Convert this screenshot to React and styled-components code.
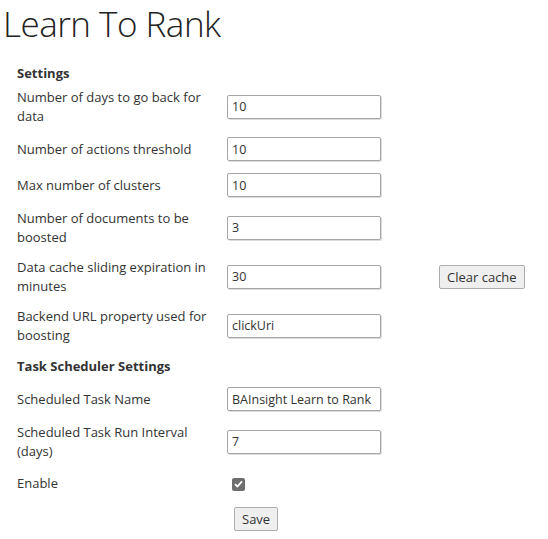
import React from 'react';
import styled, { createGlobalStyle } from 'styled-components';

const Global = createGlobalStyle`
	body {
		margin: 0;
		background: #fff;
		font-family: "Open Sans", "Noto Sans", sans-serif;
		color: #333;
	}
`

const Page = styled.div`
	padding: 0 0 0 3px;
`

const Title = styled.h1`
	margin: 0;
	font-size: 35px;
	line-height: 48px;
	font-weight: 300;
	letter-spacing: -0.5px;
	color: #222;
`

const Form = styled.div`
	padding: 16px 0 0 14px;
	font-size: 13px;
	line-height: 18.5px;
`

const Heading = styled.div`
	font-weight: 700;
	line-height: 18px;
	margin: ${p => p.$top || 0}px 0 ${p => p.$bottom || 0}px;
`

const Row = styled.div`
	display: grid;
	grid-template-columns: 210px 212px auto;
	align-items: center;
	padding: ${p => p.$pad || 6}px 0;
`

const Label = styled.div`
	padding-right: 10px;
`

const Input = styled.input`
	box-sizing: border-box;
	width: 154px;
	height: 24px;
	margin: 0;
	padding: 0 4px;
	border: 1px solid #a6a6a6;
	border-radius: 2px;
	box-shadow: 1px 1px 0 #dcdcdc;
	font: inherit;
	font-size: 12.5px;
	color: #333;
	outline: none;
`

const Button = styled.button`
	box-sizing: border-box;
	height: 24px;
	padding: 0 7px;
	margin: 0;
	border: 1px solid #adadad;
	border-radius: 2px;
	background: #efefef;
	font-family: inherit;
	font-size: 13px;
	color: #333;
	cursor: pointer;
	justify-self: start;
`

const Check = styled.span`
	display: inline-flex;
	align-items: center;
	justify-content: center;
	width: 13px;
	height: 13px;
	margin-left: 5px;
	border-radius: 2px;
	background: #6f6f6f;
`

const Actions = styled.div`
	padding: 6px 0 0 217px;
`

function Field({ label, value, children }) {
	return (
		<Row>
			<Label>{label}</Label>
			<div><Input defaultValue={value} /></div>
			{children}
		</Row>
	);
}

export default function App() {
	return (
		<Page>
			<Global />
			<Title>Learn To Rank</Title>
			<Form>
				<Heading>Settings</Heading>
				<Field label="Number of days to go back for data" value="10" />
				<Field label="Number of actions threshold" value="10" />
				<Field label="Max number of clusters" value="10" />
				<Field label="Number of documents to be boosted" value="3" />
				<Field label="Data cache sliding expiration in minutes" value="30">
					<Button>Clear cache</Button>
				</Field>
				<Field label="Backend URL property used for boosting" value="clickUri" />
				<Heading $top={7} $bottom={6}>Task Scheduler Settings</Heading>
				<Field label="Scheduled Task Name" value="BAInsight Learn to Rank" />
				<Field label="Scheduled Task Run Interval (days)" value="7" />
				<Row $pad={8}>
					<Label>Enable</Label>
					<div>
						<Check>
							<svg width="9" height="8" viewBox="0 0 9 8">
								<path d="M1 4.2 L3.4 6.5 L8 1.3" fill="none" stroke="#fff" strokeWidth="1.8" />
							</svg>
						</Check>
					</div>
				</Row>
				<Actions>
					<Button>Save</Button>
				</Actions>
			</Form>
		</Page>
	);
}
